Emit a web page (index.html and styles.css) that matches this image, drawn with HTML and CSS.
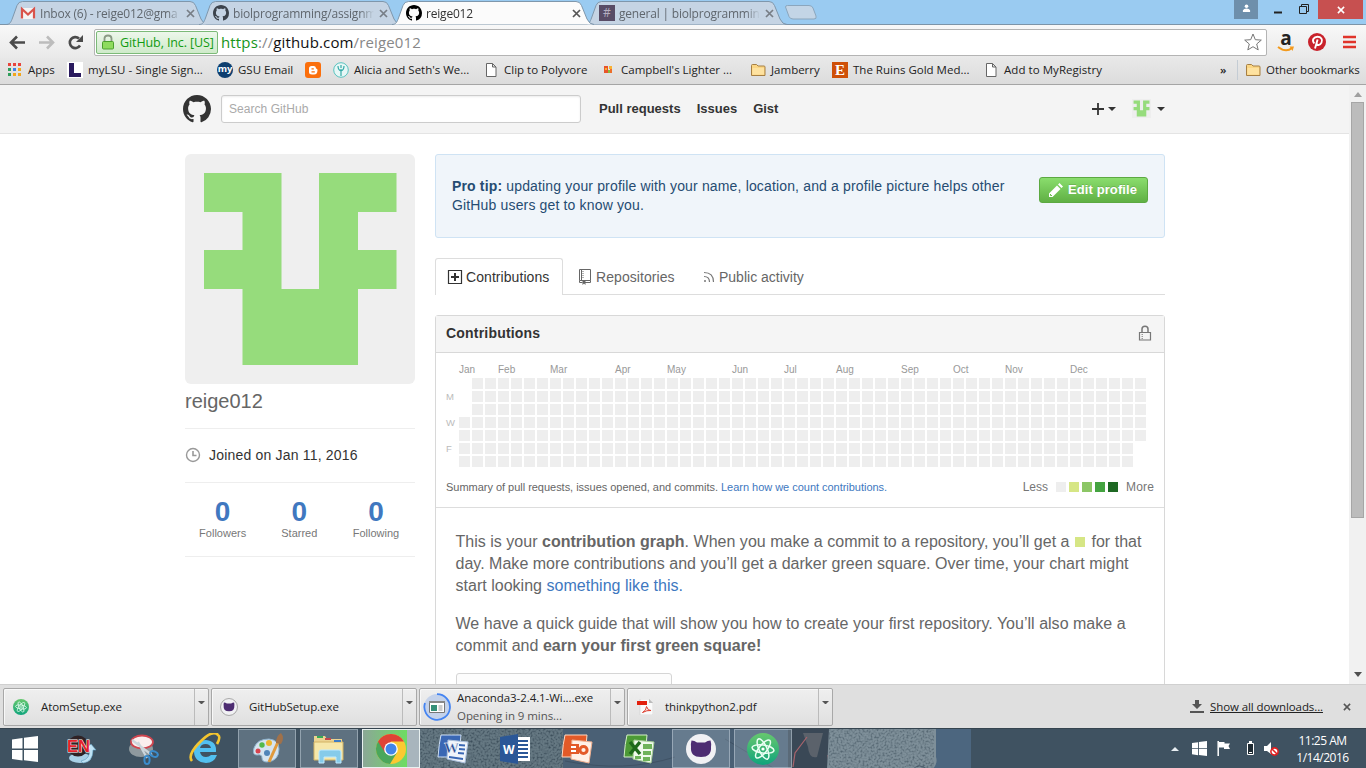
FILE: index.html
```html
<!DOCTYPE html>
<html lang="en">
<head>
<meta charset="utf-8">
<title>reige012</title>
<link rel="stylesheet" href="styles.css">
</head>
<body>
<svg class="defs" width="0" height="0">
  <symbol id="octocat" viewBox="0 0 16 16"><path d="M8 0C3.58 0 0 3.58 0 8c0 3.54 2.29 6.53 5.47 7.59.4.07.55-.17.55-.38 0-.19-.01-.82-.01-1.49-2.01.37-2.53-.49-2.69-.94-.09-.23-.48-.94-.82-1.13-.28-.15-.68-.52-.01-.53.63-.01 1.08.58 1.23.82.72 1.21 1.87.87 2.33.66.07-.52.28-.87.51-1.07-1.78-.2-3.64-.89-3.64-3.95 0-.87.31-1.59.82-2.15-.08-.2-.36-1.02.08-2.12 0 0 .67-.21 2.2.82.64-.18 1.32-.27 2-.27.68 0 1.36.09 2 .27 1.53-1.04 2.2-.82 2.2-.82.44 1.1.16 1.92.08 2.12.51.56.82 1.27.82 2.15 0 3.07-1.87 3.75-3.65 3.95.29.25.54.73.54 1.48 0 1.07-.01 1.93-.01 2.2 0 .21.15.46.55.38A8.013 8.013 0 0016 8c0-4.42-3.58-8-8-8z"/></symbol>
  <symbol id="tabshape" viewBox="0 0 202 25"><path d="M0 24.500C4 24.500 5 22 6.500 18L11 5.500Q12.500 1.500 16.500 1.500H184Q188 1.500 189.500 5.500L195 19Q197.500 24.500 202 24.500"/></symbol>
  <symbol id="close" viewBox="0 0 9 9"><path d="M1 1l7 7M8 1L1 8" stroke-width="1.700" fill="none"/></symbol>
  <symbol id="identicon" viewBox="0 0 230 230"><path fill="#96dc7c" d="M19 19h77.500v116H134V19h77.500v39H173v38h38.500v39H173v76H57.500v-76H19V96h38.500V58H19z"/></symbol>
  <symbol id="folder" viewBox="0 0 16 16"><path d="M1.500 13.500v-10q0-1 1-1h4l1.500 1.500h6q1 0 1 1v8.500z" fill="#fbd684" stroke="#a67f43"/><path d="M2.500 12.500V6h11.500v6.500z" fill="#fee2a0"/></symbol>
  <symbol id="page" viewBox="0 0 16 16"><path d="M3.500 1.500h6l3.500 3.500v9.500h-9.500zM9.500 1.500V5H13" fill="#fff" stroke="#666"/></symbol>
  <symbol id="win" viewBox="0 0 26 26"><path fill="#fff" d="M0 3.500L10.500 2v10.500H0zM12 1.800L26 0v12.500H12zM0 14h10.500v10.500L0 23zM12 14h14v12l-14-1.800z"/></symbol>
  <symbol id="atom" viewBox="0 0 32 32"><circle cx="16" cy="16" r="16" fill="url(#ag)"/><g fill="none" stroke="#eafff4" stroke-width="1.500"><ellipse cx="16" cy="16" rx="4" ry="11" transform="rotate(-25 16 16)"/><ellipse cx="16" cy="16" rx="4" ry="11" transform="rotate(38 16 16)"/><ellipse cx="16" cy="16" rx="4" ry="11" transform="rotate(98 16 16)"/></g><circle cx="16" cy="16" r="1.600" fill="#fff"/></symbol>
  <symbol id="ghcat" viewBox="0 0 30 30"><circle cx="15" cy="15" r="15" fill="#f1f1f4"/><path fill="#4d2c72" d="M5.500 6.500q3 0 5.500 2h8q2.500-2 5.500-2 1 3 .5 6.500.8 10-10 10Q4 23 5 13 4.500 10 5.500 6.500z"/></symbol>
  <linearGradient id="ag" x2="0" y2="1"><stop stop-color="#67c86e"/><stop offset="1" stop-color="#10a47c"/></linearGradient>
</svg>
<div class="screen">

  <div class="tabstrip">
    <div class="tab t1"><svg class="shape"><use href="#tabshape"/></svg>
      <svg class="fav" viewBox="0 0 16 16"><path fill="#f4f4f4" d="M1 3h14v11H1z"/><path d="M2 13.500V4l6 5.500L14 4v9.500" fill="none" stroke="#d9534b" stroke-width="2.200"/></svg>
      <span class="title">Inbox (6) - reige012@gma</span><svg class="x"><use href="#close"/></svg></div>
    <div class="tab t2"><svg class="shape"><use href="#tabshape"/></svg><svg class="fav cat"><use href="#octocat"/></svg><span class="title">biolprogramming/assignm</span><svg class="x"><use href="#close"/></svg></div>
    <div class="tab t4"><svg class="shape"><use href="#tabshape"/></svg><span class="fav hash">#</span><span class="title">general | biolprogramming</span><svg class="x"><use href="#close"/></svg></div>
    <div class="tab t3 active"><svg class="shape"><use href="#tabshape"/></svg><svg class="fav"><use href="#octocat"/></svg><span class="title">reige012</span><svg class="x"><use href="#close"/></svg></div>
    <svg class="newtab" viewBox="0 0 34 17"><path d="M1.500 3Q1.500 1.500 3.500 1.500H25q3 0 4 2.500l3 8q1 3-2 3H9q-3 0-4-2.500z" fill="#c3d5e6" stroke="#8ba6bd"/></svg>
    <div class="winctl">
      <span class="user"><svg viewBox="0 0 10 10"><circle cx="5" cy="2.500" r="2" fill="#fff"/><path d="M1 9V7q1-2 4-2t4 2v2z" fill="#fff"/></svg></span>
      <svg class="ctl" viewBox="0 0 60 19"><path d="M16 12.500h8" stroke="#222" stroke-width="2"/><path d="M41.500 6.500h7v7h-7zM43.500 6.500v-2h7v7h-2" fill="none" stroke="#222"/></svg>
      <span class="closebtn"><svg><use href="#close"/></svg></span>
    </div>
  </div>

  <div class="toolbar">
    <svg class="nav" viewBox="0 0 86 28"><g fill="none" stroke-width="2.600"><path d="M11 14.500h14M17 8.500l-6 6 6 6" stroke="#4b4b4b"/><path d="M39 14.500h13M47 8.500l6 6-6 6" stroke="#bcbcbc"/><path d="M80 17.500a5.500 5.500 0 1 1-1-7" stroke="#4b4b4b"/></g><path d="M83 7v7h-7z" fill="#4b4b4b"/></svg>
    <div class="omni">
      <div class="ev"><svg viewBox="0 0 14 16"><path d="M3.500 8V4.500q0-3 3.500-3t3.500 3V8" fill="none" stroke="#8a9a85" stroke-width="1.800"/><rect x="1.500" y="7.500" width="11" height="7.500" rx="1" fill="#8edb5e" stroke="#4ba02e"/></svg><span>GitHub, Inc. [US]</span></div>
      <span class="url"><i class="g">https</i><i>://</i><i class="k">github.com</i><i>/reige012</i></span>
      <svg class="star" viewBox="0 0 18 18"><path d="M9 1l2.300 5.700 6 .4-4.600 3.900 1.500 5.900L9 13.700l-5.200 3.200 1.500-5.900L.7 7.100l6-.4z" fill="#fff" stroke="#777"/></svg>
    </div>
    <div class="amz"><span>a</span><svg viewBox="0 0 18 6"><path d="M1 1q8 6 14 1" fill="none" stroke="#f39a1d" stroke-width="2"/><path d="M12.500.5h4.500L15.500 5z" fill="#f39a1d"/></svg></div>
    <svg class="pin" viewBox="0 0 18 18"><circle cx="9" cy="9" r="9" fill="#c9222b"/><path d="M6.300 10.500C3.300 7 6 3.700 9.500 3.700s5.500 3 4 6-4.300 2.700-4.800 1M9.600 6.500L7 15.500" fill="none" stroke="#fff" stroke-width="1.900"/></svg>
    <svg class="menu" viewBox="0 0 13 14"><path d="M0 2h13M0 7h13M0 12h13" stroke="#e0342b" stroke-width="2.700"/></svg>
  </div>

  <div class="bookmarks">
    <div class="bm b1"><svg viewBox="0 0 16 16"><path fill="#e8453c" d="M1 1h3v3H1zM6 1h3v3H6zM11 1h3v3h-3z"/><path fill="#2f9e5b" d="M1 6h3v3H1zM1 11h3v3H1z"/><path fill="#3f82e8" d="M6 6h3v3H6z"/><path fill="#f2a61d" d="M11 6h3v3h-3zM6 11h3v3H6zM11 11h3v3h-3z"/></svg><span>Apps</span></div>
    <div class="bm b2"><svg viewBox="0 0 16 16"><path fill="#fff" d="M0 0h16v16H0z"/><path fill="#2a1a5e" d="M2 1h5v10h7v4H2z"/></svg><span>myLSU - Single Sign...</span></div>
    <div class="bm b3"><b class="my">my</b><span>GSU Email</span></div>
    <div class="bm b4"><svg viewBox="0 0 16 16"><rect width="16" height="16" rx="3" fill="#fb6f0c"/><path d="M6.500 4h2.500q2 0 2 2.500 1.500 0 1.500 1.500 0 4.500-3.500 4.500H7Q4 12.500 4 10V6.500Q4 4 6.500 4z" fill="#fff"/><path d="M6.500 6.800h2.300M6.500 9.800h3.300" stroke="#fb6f0c" stroke-width="1.300"/></svg></div>
    <div class="bm b5"><svg viewBox="0 0 16 16"><circle cx="8" cy="8" r="7.300" fill="#e6f7f6" stroke="#58c3bf"/><path d="M8 14V7M5 4q0 4 3 5 3-1 3-5M8 3v3" fill="none" stroke="#35aaa7" stroke-width="1.200"/></svg><span>Alicia and Seth's We...</span></div>
    <div class="bm b6"><svg><use href="#page"/></svg><span>Clip to Polyvore</span></div>
    <div class="bm b7"><svg viewBox="0 0 16 16"><path fill="#e8542a" d="M4 4h4v7H4z"/><path fill="#f9b233" d="M5 6h2v2H5zM9 4h3v3H9z"/><path fill="#8ab83a" d="M8 8h2v3H8z"/><path fill="#ec6f2b" d="M10 7h2v4h-2z"/></svg><span>Campbell's Lighter ...</span></div>
    <div class="bm b8"><svg><use href="#folder"/></svg><span>Jamberry</span></div>
    <div class="bm b9"><b class="etsy">E</b><span>The Ruins Gold Med...</span></div>
    <div class="bm b10"><svg><use href="#page"/></svg><span>Add to MyRegistry</span></div>
    <div class="more">»</div>
    <div class="bm other"><svg><use href="#folder"/></svg><span>Other bookmarks</span></div>
  </div>

  <div class="viewport">
    <div class="page">
      <div class="ghhead"><div class="wrap">
        <svg class="mark"><use href="#octocat"/></svg>
        <div class="search">Search GitHub</div>
        <b class="n1">Pull requests</b><b class="n2">Issues</b><b>Gist</b>
        <div class="right"><svg class="plus" viewBox="0 0 12 12"><path d="M6 0v12M0 6h12" stroke="#333" stroke-width="1.800"/></svg><i class="caret"></i><svg class="mini"><use href="#identicon"/></svg><i class="caret"></i></div>
      </div></div>
      <div class="wrap cols">
        <div class="side">
          <div class="avatar"><svg><use href="#identicon"/></svg></div>
          <h1>reige012</h1>
          <div class="joined"><svg viewBox="0 0 16 16" fill="none" stroke="#999"><circle cx="8" cy="8" r="6.500" stroke-width="1.400"/><path d="M8 4v4.500h3.500" stroke-width="1.600"/></svg>Joined on Jan 11, 2016</div>
          <div class="stats"><div><b>0</b>Followers</div><div><b>0</b>Starred</div><div><b>0</b>Following</div></div>
        </div>
        <div class="main">
          <div class="flash"><p><b>Pro tip:</b> updating your profile with your name, location, and a profile picture helps other GitHub users get to know you.</p>
            <div class="btn"><svg viewBox="0 0 14 14"><path fill="#fff" d="M0 14v-3.500L8 2.500 11.500 6l-8 8zM9 1.500L10.500 0 14 3.500 12.500 5z"/><path d="M1.500 11v1.500H3" stroke="#6cbc4d" fill="none"/></svg>Edit profile</div></div>
          <div class="tabs">
            <div class="on"><svg viewBox="0 0 16 16" fill="none" stroke="#333"><path d="M1.500 1.500h13v13h-13z" stroke-width="1.200"/><path d="M8 4v8M4 8h8" stroke-width="2"/></svg>Contributions</div>
            <div class="repo"><svg viewBox="0 0 16 16" fill="none" stroke="#666"><path d="M2.500.5h11v11h-11zM4.500 1v10.500M2.500 11.500v2h3M8 13.500h5.500v-2"/><path d="M5.500 12v4L7 14.500 8.500 16v-4z" fill="#666" stroke="none"/><path d="M5.500 2.500h1M5.500 4.500h1M5.500 6.500h1M5.500 8.500h1"/></svg>Repositories</div>
            <div class="act"><svg viewBox="0 0 12 12" fill="none" stroke="#777"><path d="M1 1.500q9.500 0 9.500 9.500M1 5.500q5.500 0 5.500 5.500" stroke-width="1.200"/><circle cx="2" cy="10" r="1" fill="#777" stroke="none"/></svg>Public activity</div>
          </div>
          <div class="panel">
            <div class="phead">Contributions<svg viewBox="0 0 14 16" fill="none" stroke="#777"><path d="M4 7V4q0-2.800 3-2.800T10 4v3" stroke-width="1.500"/><path d="M1.500 7.500h11v7.500h-11z" stroke-width="1.200"/><path d="M3.500 9.500h1.500M3.500 11.500h1.500M3.500 13.500h1.500" stroke="#999"/></svg></div>
            <div class="graph">
              <div class="months" id="months"></div>
              <div class="calrow"><div class="days"><span>M</span><span>W</span><span>F</span></div><div class="cells" id="cells"></div></div>
              <div class="legend"><span>Summary of pull requests, issues opened, and commits. <a>Learn how we count contributions.</a></span>
                <div class="scale">Less<i class="c0"></i><i class="c1"></i><i class="c2"></i><i class="c3"></i><i class="c4"></i><em>More</em></div></div>
            </div>
            <div class="blurb">
              <p>This is your <b>contribution graph</b>. When you make a commit to a repository, you’ll get a <i class="sq"></i> for that day. Make more contributions and you’ll get a darker green square. Over time, your chart might start looking <a>something like this.</a></p>
              <p>We have a quick guide that will show you how to create your first repository. You’ll also make a commit and <b>earn your first green square!</b></p>
              <div class="guide"></div>
            </div>
          </div>
        </div>
      </div>
    </div>
    <div class="scroll"><i class="up"></i><div class="thumb"></div><i class="down"></i></div>
  </div>

  <div class="shelf">
    <div class="dl"><svg><use href="#atom"/></svg><span class="d1">AtomSetup.exe</span><div class="drop"><i></i></div></div>
    <div class="dl"><svg class="ring"><use href="#ghcat"/></svg><span class="d2">GitHubSetup.exe</span><div class="drop"><i></i></div></div>
    <div class="dl prog"><svg class="big" viewBox="0 0 28 28"><circle cx="14" cy="14" r="13" fill="#c4d2ea"/><path d="M14 1.200A12.800 12.800 0 1 1 2 10" fill="none" stroke="#4484f2" stroke-width="1.800"/><path fill="#fff" stroke="#777" d="M6.500 8.500h15v11h-15z"/><path fill="#888" d="M6 8h16v2H6z"/><path fill="#358f78" d="M8 12h6v6H8z"/><path d="M15.500 13h4M15.500 15h4M15.500 17h4" stroke="#999"/></svg><span class="d3">Anaconda3-2.4.1-Wi....exe<small>Opening in 9 mins...</small></span><div class="drop"><i></i></div></div>
    <div class="dl"><svg viewBox="0 0 16 16"><path d="M3 0h9l4 4v12H3z" fill="#fafafa" stroke="#ccc" stroke-width=".6"/><path d="M12 0v4h4" fill="#bbb"/><path d="M0 2h10v4H0z" fill="#e3200d"/><path d="M5.500 13.500q4-2 4-6 1.500 4.500 4.500 4-4-.5-8.500 2z" fill="none" stroke="#dd3a2a"/></svg><span class="d4">thinkpython2.pdf</span><div class="drop"><i></i></div></div>
    <svg class="dlicon" viewBox="0 0 14 13"><path d="M5 0h4v4h3L7 9 2 4h3zM0 11h14v2H0z" fill="#555"/></svg>
    <u>Show all downloads...</u>
    <svg class="shx"><use href="#close"/></svg>
  </div>

  <div class="taskbar">
    <svg class="wall" viewBox="0 0 576 40"><filter id="n" x="0" y="0" width="1" height="1" color-interpolation-filters="sRGB"><feTurbulence type="fractalNoise" baseFrequency=".5" numOctaves="2"/><feColorMatrix values="0 0 0 0 .2  0 0 0 0 .27  0 0 0 0 .32  2 0 0 0 -.85"/></filter>
      <path fill="#657882" d="M0 0h170v40H0z"/><path fill="#4a6075" d="M168 0h240v40H168z"/><path fill="#3a4856" d="M393 0h42l-2 40h-40z"/><path fill="#5b626b" d="M408 4h20l-6 24q-8 2-9-10z"/><path d="M412 8l-12 16-2 14M433 26l2 14" stroke="#a8646c" stroke-width="1.200" fill="none"/><path fill="#7e8f99" d="M434 0h108v40H432z"/><path fill="#4c667f" d="M541 0h35v40h-38q5-6 3-12z"/><path d="M518 40q6-6 14 0M170 32q60 12 110-4M330 10q20 12 50 30" stroke="#3a4c5e" fill="none" opacity=".7"/><path filter="url(#n)" d="M0 0h168v40H0z"/><path filter="url(#n)" opacity=".7" d="M434 0h105v40H434z"/></svg>
    <div class="task start"><svg><use href="#win"/></svg></div>
    <div class="task en"><svg viewBox="0 0 32 32"><ellipse cx="15" cy="25" rx="11" ry="5" fill="#a9d0e6"/><path d="M16 28q10-2 8-12h-3l5-5 5 6h-3q0 12-10 13z" fill="#bfe2f4" stroke="#5f9dc0" stroke-width=".6"/><circle cx="13" cy="13" r="10.500" fill="#2f2225"/><text x="2" y="19" textLength="23" lengthAdjust="spacingAndGlyphs" font-family="Liberation Sans" font-weight="bold" font-size="17" fill="#e5222b" stroke="#fff" stroke-width="1" paint-order="stroke">EN</text></svg></div>
    <div class="task"><svg viewBox="0 0 32 32"><ellipse cx="14" cy="16" rx="12" ry="8" fill="#8f999e"/><ellipse cx="15" cy="9" rx="11" ry="6.500" fill="#fbeeee" stroke="#cf4650" stroke-width="1.800"/><path d="M5 7l20 15M11 9l9 16" stroke="#ccd6dc" stroke-width="2.200"/><ellipse cx="27" cy="21" rx="4" ry="2.600" transform="rotate(25 27 21)" fill="none" stroke="#3b8ccc" stroke-width="2"/><ellipse cx="20" cy="27" rx="2.600" ry="4" fill="none" stroke="#3b8ccc" stroke-width="2"/></svg></div>
    <div class="task"><svg viewBox="0 0 32 32"><path d="M27 19H11q1 5 6 5 3 0 5-2h6q-3 8-11 8Q5 29 5 18 6 7 17 7q11 1 10 12zM11 15h11q-1-4-5.500-4T11 15z" fill="#52c0f0"/><path d="M3 28Q-2 22 11 9T29 2q3 2-1 9" fill="none" stroke="#f4c52f" stroke-width="2.600"/></svg></div>
    <div class="task open"><svg viewBox="0 0 32 32"><path d="M3 15Q6 6 18 6q10 1 10 10 0 12-12 13-5 0-5-4t-5-3q-5 0-3-7z" fill="#d6e4ef" stroke="#8fb4cf"/><circle cx="18" cy="10" r="3" fill="#edb52f"/><circle cx="11" cy="12" r="2.700" fill="#54b94a"/><circle cx="7" cy="18" r="2.500" fill="#d7434e"/><circle cx="16" cy="20" r="3" fill="#5185b8"/><path d="M18 29L27 9" stroke="#e09a3c" stroke-width="3"/><path d="M25 10q0-7 5-10 4 5 0 11z" fill="#a0714a"/></svg></div>
    <div class="task open"><svg viewBox="0 0 32 32"><path d="M1 3h11l2 3h15v21H1z" fill="#ebd391"/><path d="M1 9h29v18H1z" fill="#f6e7a9" stroke="#d2b365"/><path d="M4 4h6" stroke="#36a956" stroke-width="2"/><path d="M12 6h6" stroke="#c4474b" stroke-width="2"/><path d="M21 8h7" stroke="#3d7dc5" stroke-width="2"/><path d="M6 30V19q0-2 2-2h18q2 0 2 2v11h-5v-6H11v6z" fill="#86cbea" stroke="#bfeaff"/></svg></div>
    <div class="task open lit"><svg viewBox="0 0 32 32"><circle cx="16" cy="16" r="15" fill="#fbc931"/><path d="M16 16L3 8.500A15 15 0 0 0 15 31l7-11.500z" fill="#4aa75b"/><path d="M16 8.500h13A15 15 0 0 0 3 8.500l7 11z" fill="#df4436"/><circle cx="16" cy="16" r="6.800" fill="#fff"/><circle cx="16" cy="16" r="5.500" fill="#4285e8"/></svg></div>
    <div class="task"><svg viewBox="0 0 32 32"><path d="M4 2h20l-2 22H1Q2 10 4 2z" fill="#3a67b4" stroke="#cfe0f5"/><path d="M11 7l20 2-3 21-18-4z" fill="#f0f4fb" stroke="#aabfdc"/><path d="M22 12l6 .5M22 16l6 .5M21 20l6 .5M12 24l14 2" stroke="#3a67b4" stroke-width="1.800"/><text x="7" y="20" font-family="Liberation Serif" font-weight="bold" font-size="15" fill="#264a94" stroke="#fff" stroke-width=".4">W</text></svg></div>
    <div class="task"><svg viewBox="0 0 32 32"><path d="M16 4h15v24H16z" fill="#fff"/><path d="M18 8h11M18 12h11M18 16h11M18 20h11M18 24h11" stroke="#2b5797" stroke-width="2"/><path d="M1 4l18-3v30L1 28z" fill="#2b5797"/><text x="4" y="21" font-family="Open Sans" font-weight="bold" font-size="12" fill="#fff">W</text></svg></div>
    <div class="task"><svg viewBox="0 0 32 32"><path d="M4 2h22l-2 22H1Q2 10 4 2z" fill="#e35a28" stroke="#ffd9c2"/><path d="M11 7l20 2-3 21-18-4z" fill="#fff0e6" stroke="#f0b090"/><path d="M7 11h11v10H7z" fill="#e35a28"/><path d="M10 14h5M10 18h5" stroke="#fff" stroke-width="2"/><circle cx="22.500" cy="17" r="3.600" fill="none" stroke="#e35a28" stroke-width="3"/></svg></div>
    <div class="task"><svg viewBox="0 0 32 32"><path d="M4 2h20l-2 22H1Q2 10 4 2z" fill="#4c9a36" stroke="#d5f0c8"/><path d="M11 7l20 2-3 21-18-4z" fill="#f0faec" stroke="#a9cf9a"/><path d="M20 11h9v5h-9zM20 18h8v4h-8zM12 23h6v3h-6zM20 24h7v4h-7z" fill="#6fb35a"/><path d="M7 9l10 12M17 9L7 21" stroke="#1f6a1b" stroke-width="3.500"/></svg></div>
    <div class="task open"><svg class="gh"><use href="#ghcat"/></svg></div>
    <div class="task open"><svg><use href="#atom"/></svg></div>
    <div class="tray">
      <i class="tri"></i><svg class="w"><use href="#win"/></svg>
      <svg class="flag" viewBox="0 0 14 15"><path d="M1.200 0v15" stroke="#fff" stroke-width="1.500"/><path d="M2 1h5.500v1.500H13L11.500 5l1.500 3H7V6.500H2z" fill="#fff"/></svg>
      <svg class="bat" viewBox="0 0 9 15"><path d="M1.500 2.500h6v11h-6z" fill="#1f2b33" stroke="#fff"/><path d="M3 1h3" stroke="#fff" stroke-width="2"/><path d="M3 11.500h3" stroke="#fff"/></svg>
      <svg class="vol" viewBox="0 0 15 15"><path d="M0 5h3l4-4v12L3 10H0z" fill="#fff"/><circle cx="10.500" cy="10.500" r="3.600" fill="#fff" stroke="#e02020" stroke-width="1.600"/><path d="M8 8l5 5" stroke="#e02020" stroke-width="1.600"/></svg>
      <div class="clock">11:25 AM<br>1/14/2016</div>
    </div>
  </div>
</div>
<script src="script.js"></script>
</body>
</html>
```
FILE: styles.css
```css
* { box-sizing: border-box; }
body { margin: 0; font-family: "Liberation Sans", Arial, sans-serif; overflow: hidden; }
svg { display: block; flex: none; }
i, em { font-style: normal; }
.defs { position: absolute; }
.screen { width: 1366px; height: 768px; display: flex; flex-direction: column; }

.tabstrip { height: 25px; background: #9acbf1; display: flex; position: relative; padding-left: 6px; border-bottom: 1px solid #7c94a8; font: 12px "Open Sans", sans-serif; }
.tab { width: 202px; height: 25px; margin-right: -9px; position: relative; display: flex; align-items: center; padding: 1px 0 0 14px; color: #60676e; flex: none; }
.tab .shape { position: absolute; left: 0; top: 0; width: 202px; height: 25px; fill: #c5d4e4; stroke: #7f97ac; }
.tab > *:not(.shape) { position: relative; }
.tab .fav { width: 16px; height: 16px; flex: none; }
.cat { fill: #3c434c; }
.tab .title { width: 141px; margin-left: 4px; white-space: nowrap; overflow: hidden; letter-spacing: -.2px; -webkit-mask-image: linear-gradient(90deg, #000 90%, transparent); }
.tab .x { width: 9px; height: 9px; stroke: #777e86; margin-left: 5px; }
.t3 { order: 3; z-index: 2; }
.t4 { order: 4; }
.tab.active { color: #333; }
.tab.active .shape { fill: #fbfbfb; }
.active .x { stroke: #555; }
.hash { background: #584c66; color: #b5afc0; text-align: center; line-height: 16px; }
.newtab { order: 5; width: 34px; height: 17px; margin: 4px 0 0 6px; }
.winctl { order: 6; margin-left: auto; display: flex; padding-right: 3px; }
.user { width: 24px; height: 19px; background: #6e8fab; display: grid; place-items: center; }
.user svg { width: 9px; height: 11px; margin-bottom: 3px; }
.ctl { width: 60px; height: 19px; }
.closebtn { width: 45px; height: 19px; background: #c75050; display: grid; place-items: center; }
.closebtn svg { width: 8px; height: 8px; stroke: #fff; }

.toolbar { height: 33px; display: flex; align-items: center; background: linear-gradient(#f8f8f8, #e9e9e9); padding-top: 1px; }
.nav { width: 86px; height: 28px; }
.omni { margin-left: 8px; width: 1173px; height: 27px; background: #fff; border: 1px solid #b4b4b4; border-radius: 2px; display: flex; align-items: center; padding: 0 4px 0 1px; }
.ev { width: 122px; height: 23px; border: 1px solid #7cba78; border-radius: 2px; background: linear-gradient(#edf7eb, #cfeaca); display: flex; align-items: center; padding-left: 4px; color: #119b11; font: 12.500px "Open Sans", sans-serif; letter-spacing: -.1px; white-space: nowrap; }
.ev svg { width: 14px; height: 16px; margin-right: 5px; }
.url { margin-left: 3px; font: 15px "Open Sans", sans-serif; color: #888; letter-spacing: .14px; }
.url .g { color: #17951a; } .url .k { color: #111; }
.star { width: 18px; height: 18px; margin-left: auto; }
.amz { width: 18px; margin-left: 10px; height: 22px; font: bold 19px/15px "Open Sans", sans-serif; color: #222; text-align: center; }
.amz span { display: block; height: 15px; }
.amz svg { width: 18px; height: 6px; }
.pin { width: 18px; height: 18px; margin-left: 13px; }
.menu { width: 13px; height: 14px; margin-left: 17px; }

.bookmarks { height: 27px; display: flex; align-items: center; padding-left: 7px; background: linear-gradient(#e8e8e8, #dcdcdc); border-bottom: 1px solid #a5a5a5; font: 11.500px "Open Sans", sans-serif; color: #222; padding-bottom: 3px; white-space: nowrap; }
.bm { display: flex; align-items: center; flex: none; }
.bm svg, .bm > b { width: 16px; height: 16px; margin-right: 5px; flex: none; }
.b1 { width: 60px; } .b2 { width: 150px; letter-spacing: .08px; } .b3 { width: 88px; } .b4 { width: 28px; } .b5 { width: 150px; }
.b6 { width: 117px; } .b7 { width: 150px; } .b8 { width: 82px; } .b9 { width: 151px; } .b10 { width: 237px; letter-spacing: .05px; }
.my { background: #0e3f70; color: #fff; border-radius: 8px; font-size: 9.500px; line-height: 14px; text-align: center; }
.etsy { background: #cf5008; color: #fff; font: bold 15px/16px "Liberation Serif", serif; text-align: center; }
.more { width: 17px; font-weight: 600; }
.other { border-left: 1px solid #c4ccd4; padding-left: 7px; height: 20px; letter-spacing: -.05px; }

.viewport { height: 599px; display: flex; overflow: hidden; background: #fff; }
.page { width: 1349px; }
.wrap { width: 980px; margin: 0 auto; display: flex; position: relative; left: .5px; }
.ghhead { height: 49px; background: #f4f4f4; border-bottom: 1px solid #e4e4e4; }
.ghhead .wrap { height: 47px; align-items: center; font-size: 13px; color: #333; }
.mark { width: 28px; height: 28px; fill: #333; margin-left: -2.500px; }
.search { width: 360px; height: 28px; margin: 0 18px 0 10.500px; border: 1px solid #ccc; border-radius: 3px; background: #fff; color: #aaa; font-size: 12px; line-height: 27px; padding-left: 7px; letter-spacing: .05px; box-shadow: inset 0 1px 2px rgba(0,0,0,.08); }
.n1, .n2 { margin-right: 16px; }
.right { margin-left: auto; display: flex; align-items: center; }
.plus { width: 12px; height: 12px; }
.caret { border: 4px solid transparent; border-top-color: #333; border-bottom: 0; margin-left: 4px; }
.mini { width: 19px; height: 19px; background: #eee; margin: 0 2px 0 16px; }

.cols { padding-top: 20px; }
.side { width: 230px; margin-right: 20px; flex: none; }
.avatar { height: 230px; background: #efefef; border-radius: 6px; }
.avatar svg { width: 230px; height: 230px; }
h1 { margin: 0; font-size: 20px; font-weight: normal; color: #666; height: 45px; line-height: 34px; border-bottom: 1px solid #eee; }
.joined { height: 54px; border-bottom: 1px solid #eee; display: flex; align-items: center; font-size: 14px; color: #333; letter-spacing: .19px; padding-bottom: 2px; }
.joined svg { width: 16px; height: 16px; margin-right: 8px; }
.stats { height: 74px; display: flex; border-bottom: 1px solid #eee; text-align: center; font-size: 11px; color: #777; padding-top: 14px; }
.stats div { width: 76.700px; position: relative; left: -.7px; }
.stats b { display: block; font-size: 28px; line-height: 30px; color: #4078c0; }
.main { width: 730px; }
.flash { height: 84px; background: #f0f5fa; border: 1px solid #cfe3f4; border-radius: 3px; padding: 22px 16px; display: flex; justify-content: space-between; }
.flash p { margin: 0; width: 575px; font-size: 14px; line-height: 19px; color: #264c72; letter-spacing: .155px; }
.btn { width: 109px; height: 26px; background: linear-gradient(#8add6d, #60b044); border: 1px solid #5ca941; border-radius: 3px; color: #fff; font: bold 13px/24px "Liberation Sans", sans-serif; letter-spacing: .1px; display: flex; align-items: center; padding-left: 9px; text-shadow: 0 -1px 0 rgba(0,0,0,.15); white-space: nowrap; }
.btn svg { width: 14px; height: 14px; margin-right: 5px; }
.tabs { margin-top: 20px; height: 37px; border-bottom: 1px solid #ddd; display: flex; font-size: 14px; letter-spacing: .07px; color: #666; }
.tabs > div { display: flex; align-items: center; height: 37px; }
.tabs svg { width: 16px; height: 16px; margin-right: 3px; }
.on { width: 128px; border: 1px solid #ddd; border-bottom: 0; border-radius: 3px 3px 0 0; background: #fff; color: #333; padding-left: 11px; }
.repo { margin-left: 14px; width: 126px; }
.act { letter-spacing: 0; }
.tabs .act svg { width: 12px; height: 12px; margin-right: 4px; }
.panel { margin-top: 20px; border: 1px solid #d8d8d8; border-radius: 3px; height: 500px; }
.phead { height: 37px; background: #f5f5f5; border-bottom: 1px solid #d8d8d8; padding: 0 12px 2px 10px; display: flex; align-items: center; justify-content: space-between; font-size: 14px; font-weight: bold; color: #333; letter-spacing: .2px; }
.phead svg { width: 14px; height: 16px; }
.graph { height: 155px; border-bottom: 1px solid #ddd; padding-top: 9px; }
.months { margin-left: 23px; height: 16px; display: grid; grid-template-columns: repeat(53, 13px); font-size: 10px; line-height: 16px; color: #999; }
.months span { width: 30px; }
.calrow { display: flex; }
.days { width: 23px; padding: 13px 0 0 10px; font-size: 9.500px; color: #bbb; }
.days span { display: block; height: 26px; line-height: 12px; }
.cells { display: grid; grid-template: repeat(7, 11px) / repeat(53, 11px); grid-auto-flow: column; gap: 2px; }
.cells i { background: #eee; }
.cells .gap { visibility: hidden; }
.legend { display: flex; justify-content: space-between; align-items: center; height: 16px; margin-top: 10px; padding: 0 10px; font-size: 11px; letter-spacing: -.025px; color: #666; }
.legend a, .blurb a { color: #4078c0; }
.legend > span { padding-bottom: 1px; }
.scale { display: flex; align-items: center; font-size: 12px; letter-spacing: 0; color: #767676; }
.scale i { width: 10px; height: 10px; margin-right: 3px; }
.scale .c0 { background: #eee; margin-left: 8px; } .c1 { background: #d6e685; } .c2 { background: #8cc665; } .c3 { background: #44a340; } .c4 { background: #1e6823; }
.scale em { margin-left: 5px; letter-spacing: .15px; }
.blurb { padding: 23px 19.500px; font-size: 16px; line-height: 22px; color: #666; }
.blurb p { margin: 0 0 16px; width: 692px; letter-spacing: .02px; }
.sq { display: inline-block; width: 10px; height: 10px; background: #d6e685; margin: 0 2px 0 1px; }
.guide { width: 216px; height: 40px; border: 1px solid #d5d5d5; border-radius: 3px; background: #fcfcfc; }
.scroll { width: 17px; background: #f1f1f1; display: flex; flex-direction: column; align-items: center; }
.up { border: 4px solid transparent; border-top: 0; border-bottom: 5px solid #a0a0a0; margin: 7px 0 5px; }
.thumb { width: 13px; height: 416px; background: #bcbcbc; border: 1px solid #a6a6a6; }
.down { border: 4px solid transparent; border-bottom: 0; border-top: 5px solid #505050; margin-top: auto; margin-bottom: 7px; }

.shelf { height: 44px; background: #dfdfdf; border-top: 1px solid #d0d0d0; display: flex; align-items: center; padding-left: 3px; font: 11.500px "Open Sans", sans-serif; color: #222; }
.dl { width: 206px; height: 38px; margin-right: 2px; border: 1px solid #a8a8a8; border-radius: 2px; background: linear-gradient(#efefef, #e0e0e0); box-shadow: inset 1px 1px 0 #f8f8f8; display: flex; align-items: center; padding-left: 9px; flex: none; }
.dl svg { width: 16px; height: 16px; }
.dl span { margin-left: 12px; white-space: nowrap; letter-spacing: -.07px; }
.drop { width: 14px; height: 36px; border-left: 1px solid #bbb; margin-left: auto; padding: 12px 0 0 3px; }
.drop i { display: block; width: 7px; border: 3px solid transparent; border-top-color: #555; border-bottom: 0; }
.ring { border-radius: 8px; outline: 1px solid #aaa; }
.prog { padding-left: 3px; }
.dl .big { width: 28px; height: 28px; }
.dl .d3 { margin-left: 6px; line-height: 18px; }
.d3 small { display: block; font-size: 11.500px; color: #555; }
.dlicon { width: 14px; height: 13px; margin-left: 355px; }
.shelf u { margin-left: 6px; width: 114px; white-space: nowrap; letter-spacing: -.1px; }
.shx { width: 8px; height: 8px; stroke: #555; margin-left: 19px; }

.taskbar { height: 40px; background: #3f5261; border-top: 1px solid #35444f; display: flex; align-items: center; position: relative; }
.wall { position: absolute; left: 395px; top: 0; width: 576px; height: 40px; }
.task { width: 58px; height: 39px; margin-right: 4px; display: grid; place-items: center; position: relative; flex: none; }
.task svg { width: 32px; height: 32px; }
.start { width: 50px; margin-right: 2px; }
.task.start svg { width: 26px; height: 26px; }
.task svg.gh { width: 30px; height: 30px; }
.open { background: rgba(175,195,210,.28); border: 1px solid rgba(210,222,230,.45); }
.lit { background: linear-gradient(90deg, #8ba797, #6edc62 78%, #a8b5bd 79%); border: 1px solid #e8f0f0; }
.tray { margin-left: auto; display: flex; align-items: center; color: #fff; font: 12px/17px "Open Sans", sans-serif; text-align: center; }
.tri { border: 4px solid transparent; border-top: 0; border-bottom-color: #e8eef2; margin-right: 13px; }
.tray .w { width: 15px; height: 15px; margin-right: 10px; }
.flag { width: 14px; height: 15px; margin-right: 15px; }
.bat { width: 9px; height: 15px; margin-right: 9px; }
.vol { width: 15px; height: 15px; }
.clock { width: 87px; letter-spacing: -.5px; }
```
FILE: script.js
```js
// Calendar columns are weeks; the year starts on a Wednesday and ends on a Thursday.
const months = [['Jan',0],['Feb',3],['Mar',7],['Apr',12],['May',16],['Jun',21],['Jul',25],['Aug',29],['Sep',34],['Oct',38],['Nov',42],['Dec',47]];
const head = document.getElementById('months');
for (const [name, week] of months) {
  const s = document.createElement('span');
  s.textContent = name;
  s.style.gridColumn = String(week + 1);
  s.style.gridRow = '1';
  head.appendChild(s);
}
const cells = document.getElementById('cells');
for (let i = 0; i < 371; i++) {
  const c = document.createElement('i');
  if (i < 3 || i > 368) c.className = 'gap';
  cells.appendChild(c);
}
```
